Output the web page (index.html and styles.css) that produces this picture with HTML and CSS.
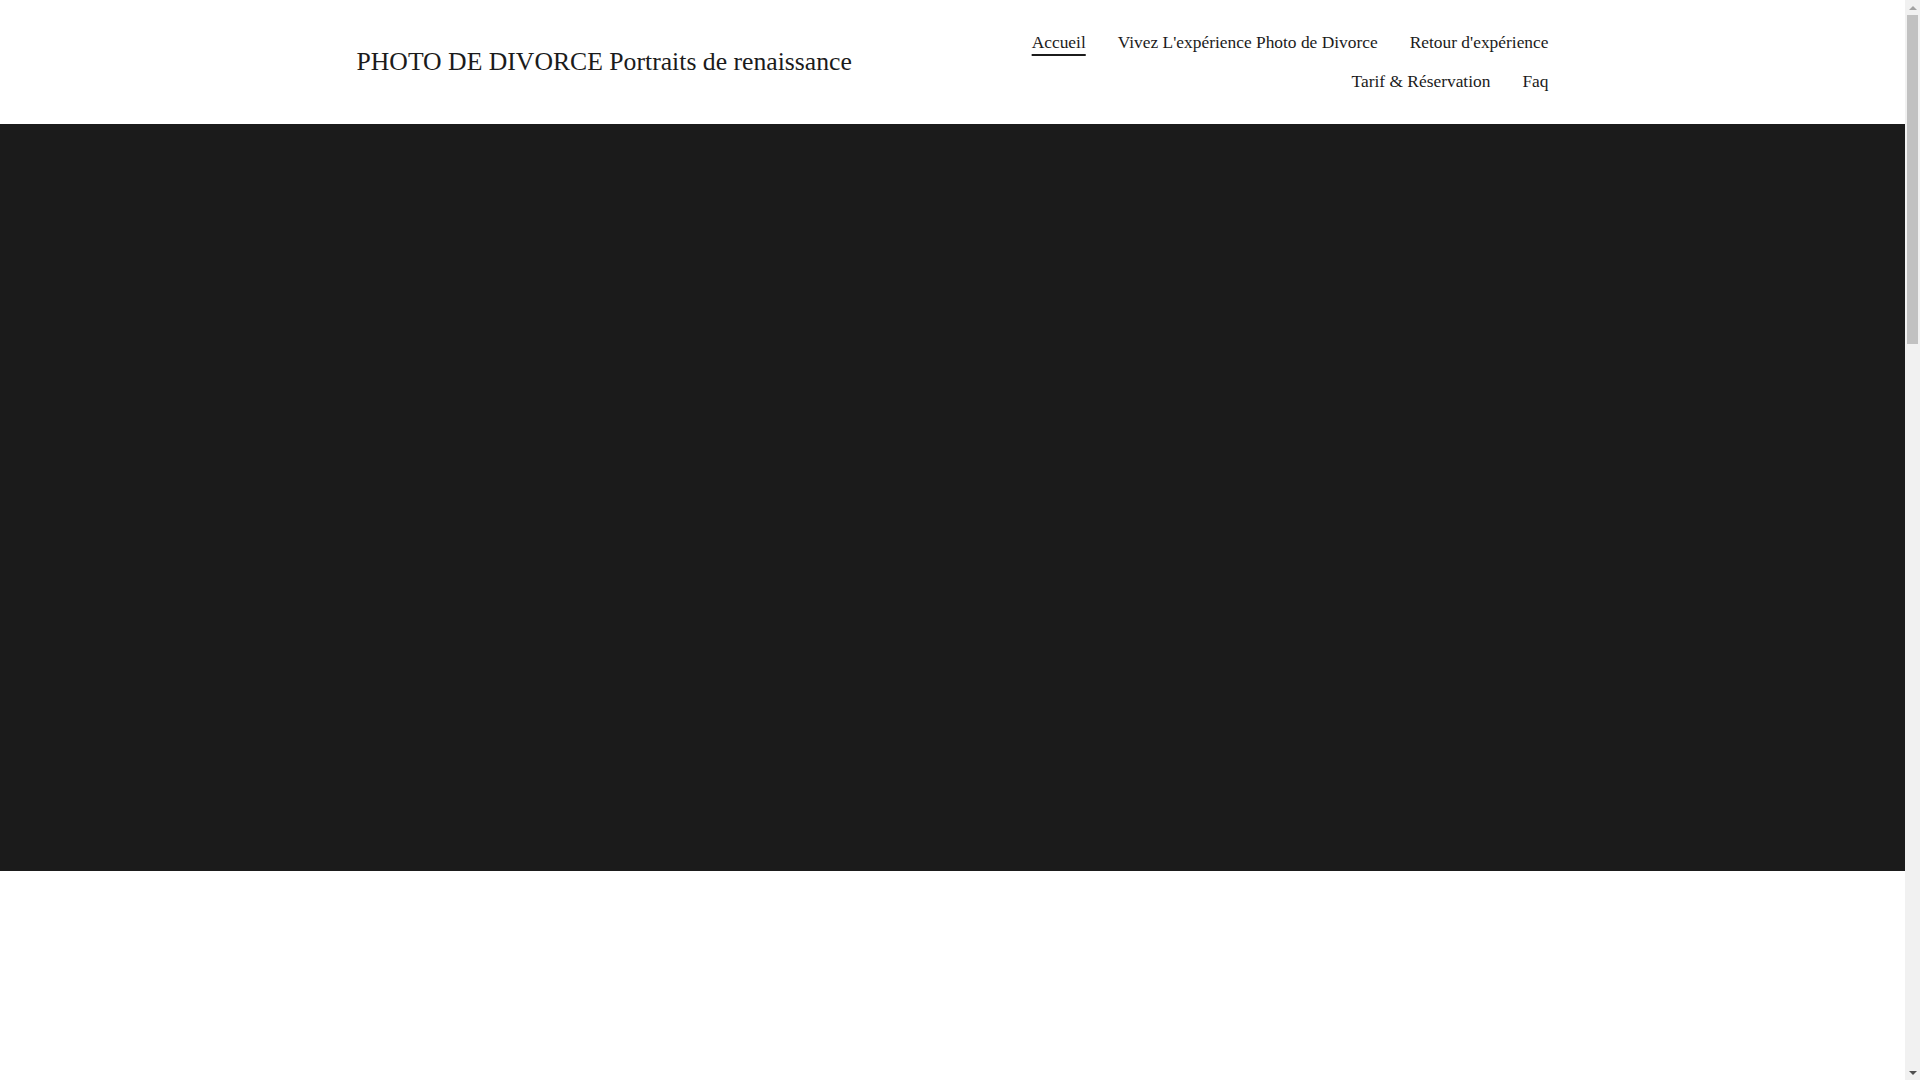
FILE: index.html
```html
<!DOCTYPE html>
<html lang="fr">
<head>
<meta charset="utf-8">
<title>PHOTO DE DIVORCE Portraits de renaissance</title>
<link rel="stylesheet" href="styles.css">
</head>
<body>
<div class="page">
  <header class="site-header">
    <div class="container header-inner">
      <div class="brand">PHOTO DE DIVORCE Portraits de renaissance</div>
      <nav class="main-nav">
        <ul class="nav-row">
          <li><a class="nav-link active" href="#">Accueil</a></li>
          <li><a class="nav-link" href="#">Vivez L'expérience Photo de Divorce</a></li>
          <li><a class="nav-link" href="#">Retour d'expérience</a></li>
        </ul>
        <ul class="nav-row">
          <li><a class="nav-link" href="#">Tarif &amp; Réservation</a></li>
          <li><a class="nav-link" href="#">Faq</a></li>
        </ul>
      </nav>
    </div>
  </header>
  <section class="hero"></section>
  <section class="below"></section>
</div>
<div class="fake-scrollbar" aria-hidden="true">
  <div class="sb-arrow sb-up"></div>
  <div class="sb-track">
    <div class="sb-thumb"></div>
  </div>
  <div class="sb-arrow sb-down"></div>
</div>
</body>
</html>
```

FILE: styles.css
```css
html, body {
  margin: 0;
  padding: 0;
  background: #ffffff;
}
body {
  font-family: "Liberation Serif", "Times New Roman", serif;
  color: #1b1b1b;
}
.page {
  margin-right: 15px;
}
.site-header {
  height: 124px;
  background: #ffffff;
}
.container {
  width: 1192px;
  margin: 0 auto;
}
.header-inner {
  height: 100%;
  display: flex;
  justify-content: space-between;
  align-items: stretch;
}
.brand {
  display: flex;
  align-items: center;
  padding-bottom: 1px;
  font-size: 25.7px;
  line-height: 30px;
  color: #1b1b1b;
  white-space: nowrap;
}
.main-nav {
  padding-top: 22px;
  display: flex;
  flex-direction: column;
  align-items: flex-end;
}
.nav-row {
  list-style: none;
  margin: 0;
  padding: 0;
  display: flex;
  justify-content: flex-end;
  gap: 32px;
  height: 39px;
  line-height: 40px;
}
.nav-link {
  font-size: 17.4px;
  color: #1b1b1b;
  text-decoration: none;
  white-space: nowrap;
}
.nav-link.active {
  text-decoration: underline;
  text-decoration-thickness: 2px;
  text-underline-offset: 6px;
}
.hero {
  height: 747px;
  background: #1b1b1b;
}
.below {
  height: 2580px;
  background: #ffffff;
}

/* imitation of the browser's vertical scrollbar */
.fake-scrollbar {
  position: fixed;
  top: 0;
  right: 0;
  width: 15px;
  height: 100vh;
  background: #f1f1f1;
  display: flex;
  flex-direction: column;
}
.sb-arrow {
  height: 15px;
  display: flex;
  align-items: center;
  justify-content: center;
}
.sb-up::before {
  content: "";
  border-left: 4px solid transparent;
  border-right: 4px solid transparent;
  border-bottom: 4px solid #a3a3a3;
}
.sb-down::before {
  content: "";
  border-left: 4px solid transparent;
  border-right: 4px solid transparent;
  border-top: 4px solid #505050;
}
.sb-track {
  flex: 1;
  padding: 0 2px;
}
.sb-thumb {
  height: 329px;
  background: #c1c1c1;
}
```
